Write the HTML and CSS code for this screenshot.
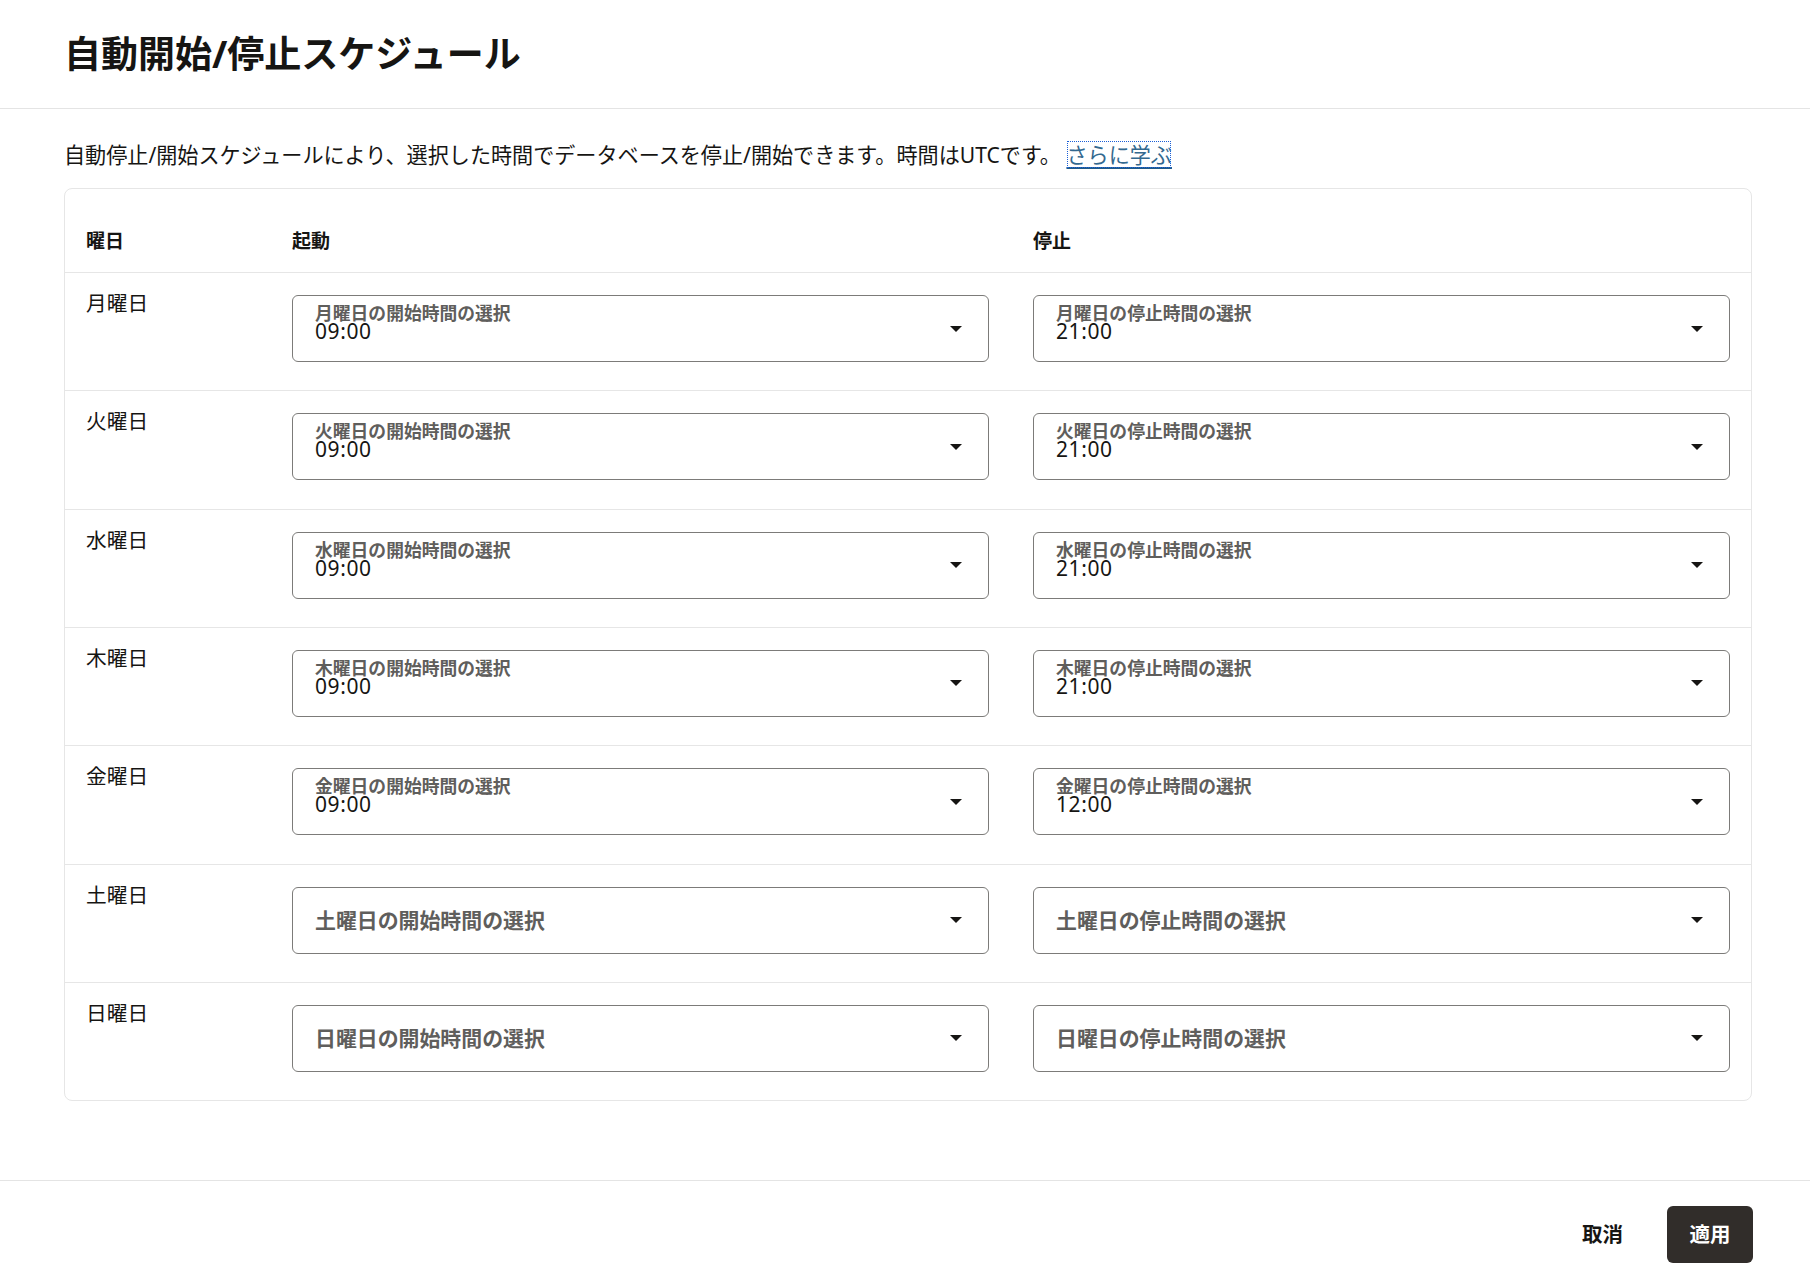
FILE: index.html
```html
<!DOCTYPE html>
<html lang="ja">
<head>
<meta charset="utf-8">
<title>自動開始/停止スケジュール</title>
<link rel="stylesheet" href="styles.css">
</head>
<body>
<div class="dialog">
  <header class="dlg-head">
    <h1 class="dlg-title">自動開始/停止スケジュール</h1>
  </header>
  <main class="dlg-body">
    <p class="intro">自動停止/開始スケジュールにより、選択した時間でデータベースを停止/開始できます。時間はUTCです。 <a class="learn" href="#">さらに学ぶ</a></p>
    <div class="card">
      <div class="row row-head">
        <div class="th">曜日</div>
        <div class="th">起動</div>
        <div class="th">停止</div>
      </div>

      <div class="row">
        <div class="day">月曜日</div>
        <div class="select filled"><div class="sel-text"><span class="sel-label">月曜日の開始時間の選択</span><span class="sel-value">09:00</span></div><svg class="caret" width="12" height="6" viewBox="0 0 12 6"><path d="M0 0h12L6 6z"/></svg></div>
        <div class="select filled"><div class="sel-text"><span class="sel-label">月曜日の停止時間の選択</span><span class="sel-value">21:00</span></div><svg class="caret" width="12" height="6" viewBox="0 0 12 6"><path d="M0 0h12L6 6z"/></svg></div>
      </div>

      <div class="row">
        <div class="day">火曜日</div>
        <div class="select filled"><div class="sel-text"><span class="sel-label">火曜日の開始時間の選択</span><span class="sel-value">09:00</span></div><svg class="caret" width="12" height="6" viewBox="0 0 12 6"><path d="M0 0h12L6 6z"/></svg></div>
        <div class="select filled"><div class="sel-text"><span class="sel-label">火曜日の停止時間の選択</span><span class="sel-value">21:00</span></div><svg class="caret" width="12" height="6" viewBox="0 0 12 6"><path d="M0 0h12L6 6z"/></svg></div>
      </div>

      <div class="row">
        <div class="day">水曜日</div>
        <div class="select filled"><div class="sel-text"><span class="sel-label">水曜日の開始時間の選択</span><span class="sel-value">09:00</span></div><svg class="caret" width="12" height="6" viewBox="0 0 12 6"><path d="M0 0h12L6 6z"/></svg></div>
        <div class="select filled"><div class="sel-text"><span class="sel-label">水曜日の停止時間の選択</span><span class="sel-value">21:00</span></div><svg class="caret" width="12" height="6" viewBox="0 0 12 6"><path d="M0 0h12L6 6z"/></svg></div>
      </div>

      <div class="row">
        <div class="day">木曜日</div>
        <div class="select filled"><div class="sel-text"><span class="sel-label">木曜日の開始時間の選択</span><span class="sel-value">09:00</span></div><svg class="caret" width="12" height="6" viewBox="0 0 12 6"><path d="M0 0h12L6 6z"/></svg></div>
        <div class="select filled"><div class="sel-text"><span class="sel-label">木曜日の停止時間の選択</span><span class="sel-value">21:00</span></div><svg class="caret" width="12" height="6" viewBox="0 0 12 6"><path d="M0 0h12L6 6z"/></svg></div>
      </div>

      <div class="row">
        <div class="day">金曜日</div>
        <div class="select filled"><div class="sel-text"><span class="sel-label">金曜日の開始時間の選択</span><span class="sel-value">09:00</span></div><svg class="caret" width="12" height="6" viewBox="0 0 12 6"><path d="M0 0h12L6 6z"/></svg></div>
        <div class="select filled"><div class="sel-text"><span class="sel-label">金曜日の停止時間の選択</span><span class="sel-value">12:00</span></div><svg class="caret" width="12" height="6" viewBox="0 0 12 6"><path d="M0 0h12L6 6z"/></svg></div>
      </div>

      <div class="row">
        <div class="day">土曜日</div>
        <div class="select empty"><div class="sel-text"><span class="sel-placeholder">土曜日の開始時間の選択</span></div><svg class="caret" width="12" height="6" viewBox="0 0 12 6"><path d="M0 0h12L6 6z"/></svg></div>
        <div class="select empty"><div class="sel-text"><span class="sel-placeholder">土曜日の停止時間の選択</span></div><svg class="caret" width="12" height="6" viewBox="0 0 12 6"><path d="M0 0h12L6 6z"/></svg></div>
      </div>

      <div class="row">
        <div class="day">日曜日</div>
        <div class="select empty"><div class="sel-text"><span class="sel-placeholder">日曜日の開始時間の選択</span></div><svg class="caret" width="12" height="6" viewBox="0 0 12 6"><path d="M0 0h12L6 6z"/></svg></div>
        <div class="select empty"><div class="sel-text"><span class="sel-placeholder">日曜日の停止時間の選択</span></div><svg class="caret" width="12" height="6" viewBox="0 0 12 6"><path d="M0 0h12L6 6z"/></svg></div>
      </div>
    </div>
  </main>
  <footer class="dlg-foot">
    <button class="btn btn-cancel" type="button">取消</button>
    <button class="btn btn-apply" type="button">適用</button>
  </footer>
</div>
</body>
</html>
```

FILE: styles.css
```css
* { box-sizing: border-box; }

html, body {
  margin: 0;
  padding: 0;
  background: #ffffff;
}

body {
  font-family: "Noto Sans", "Noto Sans CJK JP", sans-serif;
  color: #161513;
}

.dialog {
  height: 100vh;
  display: flex;
  flex-direction: column;
}

.dlg-head {
  flex: none;
  height: 109px;
  padding-left: 64px;
  display: flex;
  align-items: center;
  border-bottom: 1px solid #e4e4e4;
}

.dlg-title {
  margin: 0;
  font-size: 37px;
  line-height: 44px;
  font-weight: 700;
  color: #161513;
}

.dlg-body {
  flex: 1;
  padding: 0 58px 0 64px;
}

.intro {
  margin: 31px 0 18px;
  font-size: 21.1px;
  line-height: 30px;
  color: #161513;
}

.learn {
  color: #33698f;
  text-decoration: underline;
  text-decoration-color: #1f5a86;
  text-decoration-thickness: 2px;
  text-underline-offset: 4px;
  outline: 1px dotted #1b5fd6;
  outline-offset: -2px;
}

.card {
  border: 1px solid #e6e6e6;
  border-radius: 8px;
}

.row {
  display: grid;
  grid-template-columns: 162px 1fr 1fr;
  column-gap: 44px;
  padding: 22px 21px 28.33px;
  border-top: 1px solid #e6e6e6;
  align-items: start;
}

.row-head {
  border-top: none;
  padding-top: 40px;
  padding-bottom: 19px;
}

.th {
  font-size: 19px;
  line-height: 24px;
  font-weight: 700;
  color: #161513;
}

.day {
  margin-top: -2px;
  font-size: 20.7px;
  line-height: 21px;
  color: #161513;
}

.select {
  height: 67px;
  border: 1px solid #7c7b79;
  border-radius: 6px;
  display: flex;
  align-items: center;
  padding: 0 26px 0 22px;
}

.select.filled {
  align-items: flex-start;
}

.sel-text {
  flex: 1;
  display: flex;
  flex-direction: column;
  align-items: flex-start;
}

.select.filled .sel-text {
  padding-top: 10px;
}

.select.filled .caret {
  align-self: center;
}

.sel-label {
  font-size: 17.8px;
  line-height: 14px;
  font-weight: 700;
  color: #5f5e5c;
}

.sel-value {
  margin-top: 3px;
  font-size: 21px;
  line-height: 16px;
  letter-spacing: 0.6px;
  color: #161513;
}

.sel-placeholder {
  font-size: 20.9px;
  line-height: 26px;
  font-weight: 700;
  color: #5f5e5c;
}

.caret {
  flex: none;
  display: block;
}

.caret path {
  fill: #161513;
}

.dlg-foot {
  flex: none;
  height: 108px;
  border-top: 1px solid #e4e4e4;
  display: flex;
  justify-content: flex-end;
  align-items: center;
  gap: 22px;
  padding-right: 57px;
}

.btn {
  font-family: "Noto Sans", "Noto Sans CJK JP", sans-serif;
  font-size: 20.5px;
  font-weight: 700;
  border: none;
  cursor: pointer;
  height: 57px;
  border-radius: 6px;
  padding-bottom: 4px;
}

.btn-cancel {
  background: transparent;
  color: #161513;
  padding-left: 22px;
  padding-right: 22px;
}

.btn-apply {
  width: 86px;
  padding-left: 0;
  padding-right: 0;
  background: #312d2a;
  color: #ffffff;
}
```
